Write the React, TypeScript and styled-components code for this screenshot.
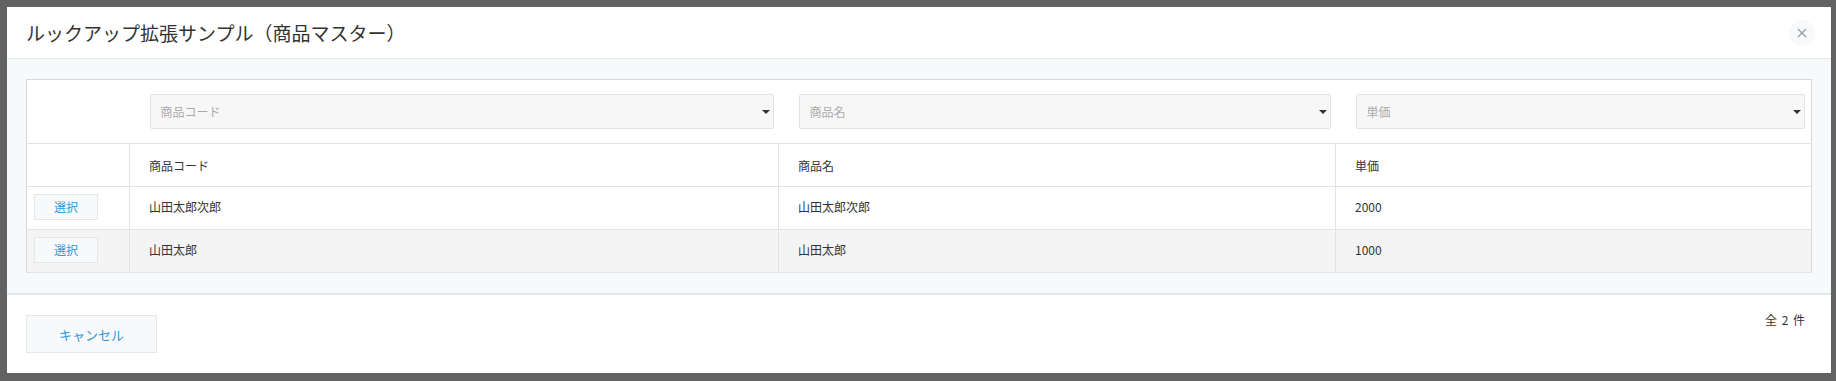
import styled, { createGlobalStyle } from 'styled-components'

const GlobalStyle = createGlobalStyle`
  html, body {
    margin: 0;
    padding: 0;
    background: #626262;
  }
  body {
    font-family: "Noto Sans CJK JP", "Noto Sans", sans-serif;
    color: #333;
  }
`

const Overlay = styled.div`
  padding: 7px 5px 9px 7px;
`

const Dialog = styled.div`
  width: 1824px;
  background: #fff;
  display: flex;
  flex-direction: column;
`

const Header = styled.div`
  height: 52px;
  box-sizing: border-box;
  display: flex;
  align-items: center;
  justify-content: space-between;
  padding: 0 16px 0 19px;
  border-bottom: 1px solid #e3e7e8;
`

const Title = styled.h1`
  margin: 0;
  font-size: 19px;
  font-weight: 400;
  color: #333;
  line-height: 1;
`

const CloseButton = styled.button`
  width: 26px;
  height: 26px;
  border-radius: 50%;
  border: none;
  background: #f7f9fa;
  display: flex;
  align-items: center;
  justify-content: center;
  padding: 0;
  margin-top: 1px;
  cursor: pointer;
`

const Body = styled.div`
  background: #f7f9fa;
  padding: 20px 19px;
  border-bottom: 2px solid #e3e7e8;
`

const Table = styled.table`
  width: 100%;
  border-collapse: collapse;
  table-layout: fixed;
  background: #fff;
  border: 1px solid #d8d8d8;
  font-size: 12px;
`

const FilterCell = styled.td<{ $right?: number }>`
  padding: 14px ${(p) => p.$right ?? 5}px 14px 20px;
  border-bottom: 1px solid #e3e3e3;
  height: 35px;
`

const Select = styled.div`
  position: relative;
  height: 35px;
  box-sizing: border-box;
  border: 1px solid #e3e3e3;
  border-radius: 2px;
  background: #f7f7f7;
  display: flex;
  align-items: center;
  padding-left: 10px;
  color: #aaa;
  font-size: 12px;
`

const Arrow = styled.span`
  position: absolute;
  right: 3px;
  top: 50%;
  margin-top: -2px;
  width: 0;
  height: 0;
  border-left: 4px solid transparent;
  border-right: 4px solid transparent;
  border-top: 4px solid #333;
`

const Row = styled.tr<{ $striped?: boolean }>`
  background: ${(p) => (p.$striped ? '#f4f4f4' : '#fff')};
`

const Cell = styled.td<{ $first?: boolean; $head?: boolean }>`
  height: ${(p) => (p.$head ? 42 : 38)}px;
  padding: 0 0 ${(p) => (p.$head ? 0 : 4)}px ${(p) => (p.$first ? 7 : 19)}px;
  border-bottom: 1px solid #e3e3e3;
  border-left: ${(p) => (p.$first ? 'none' : '1px solid #e3e3e3')};
  color: #333;
  vertical-align: middle;
  white-space: nowrap;
`

const PickButton = styled.button`
  width: 64px;
  height: 26px;
  margin-top: 1px;
  display: block;
  background: #f7f9fa;
  border: 1px solid #e3e7e8;
  color: #3498db;
  font-family: inherit;
  font-size: 12px;
  padding: 0;
  cursor: pointer;
`

const Footer = styled.div`
  display: flex;
  justify-content: space-between;
  align-items: flex-start;
  padding: 20px 26px 20px 19px;
`

const CancelButton = styled.button`
  width: 131px;
  height: 38px;
  background: #f7f9fa;
  border: 1px solid #e3e7e8;
  color: #3498db;
  font-family: inherit;
  font-size: 13px;
  padding: 0;
  cursor: pointer;
`

const Count = styled.div`
  font-size: 12px;
  line-height: 1;
  color: #333;
  word-spacing: 2px;
  margin-top: -1px;
`

const columns = ['商品コード', '商品名', '単価']

const records = [
  { code: '山田太郎次郎', name: '山田太郎次郎', price: '2000' },
  { code: '山田太郎', name: '山田太郎', price: '1000' },
]

const App = () => {
  return (
    <>
      <GlobalStyle />
      <Overlay>
        <Dialog>
          <Header>
            <Title>ルックアップ拡張サンプル（商品マスター）</Title>
            <CloseButton aria-label="close">
              <svg width="10" height="10" viewBox="0 0 10 10">
                <path d="M1 1L9 9M9 1L1 9" stroke="#999" strokeWidth="1.2" fill="none" />
              </svg>
            </CloseButton>
          </Header>

          <Body>
            <Table>
              <colgroup>
                <col style={{ width: 103 }} />
                <col style={{ width: 649 }} />
                <col style={{ width: 557 }} />
                <col />
              </colgroup>
              <tbody>
                <tr>
                  <FilterCell />
                  {columns.map((c, i) => (
                    <FilterCell key={c} $right={i === 2 ? 6 : 5}>
                      <Select>
                        {c}
                        <Arrow />
                      </Select>
                    </FilterCell>
                  ))}
                </tr>
                <Row>
                  <Cell $first $head />
                  {columns.map((c) => (
                    <Cell key={c} $head>
                      {c}
                    </Cell>
                  ))}
                </Row>
                {records.map((r, i) => (
                  <Row key={i} $striped={i % 2 === 1}>
                    <Cell $first>
                      <PickButton>選択</PickButton>
                    </Cell>
                    <Cell>{r.code}</Cell>
                    <Cell>{r.name}</Cell>
                    <Cell>{r.price}</Cell>
                  </Row>
                ))}
              </tbody>
            </Table>
          </Body>

          <Footer>
            <CancelButton>キャンセル</CancelButton>
            <Count>全 2 件</Count>
          </Footer>
        </Dialog>
      </Overlay>
    </>
  )
}

export default App
